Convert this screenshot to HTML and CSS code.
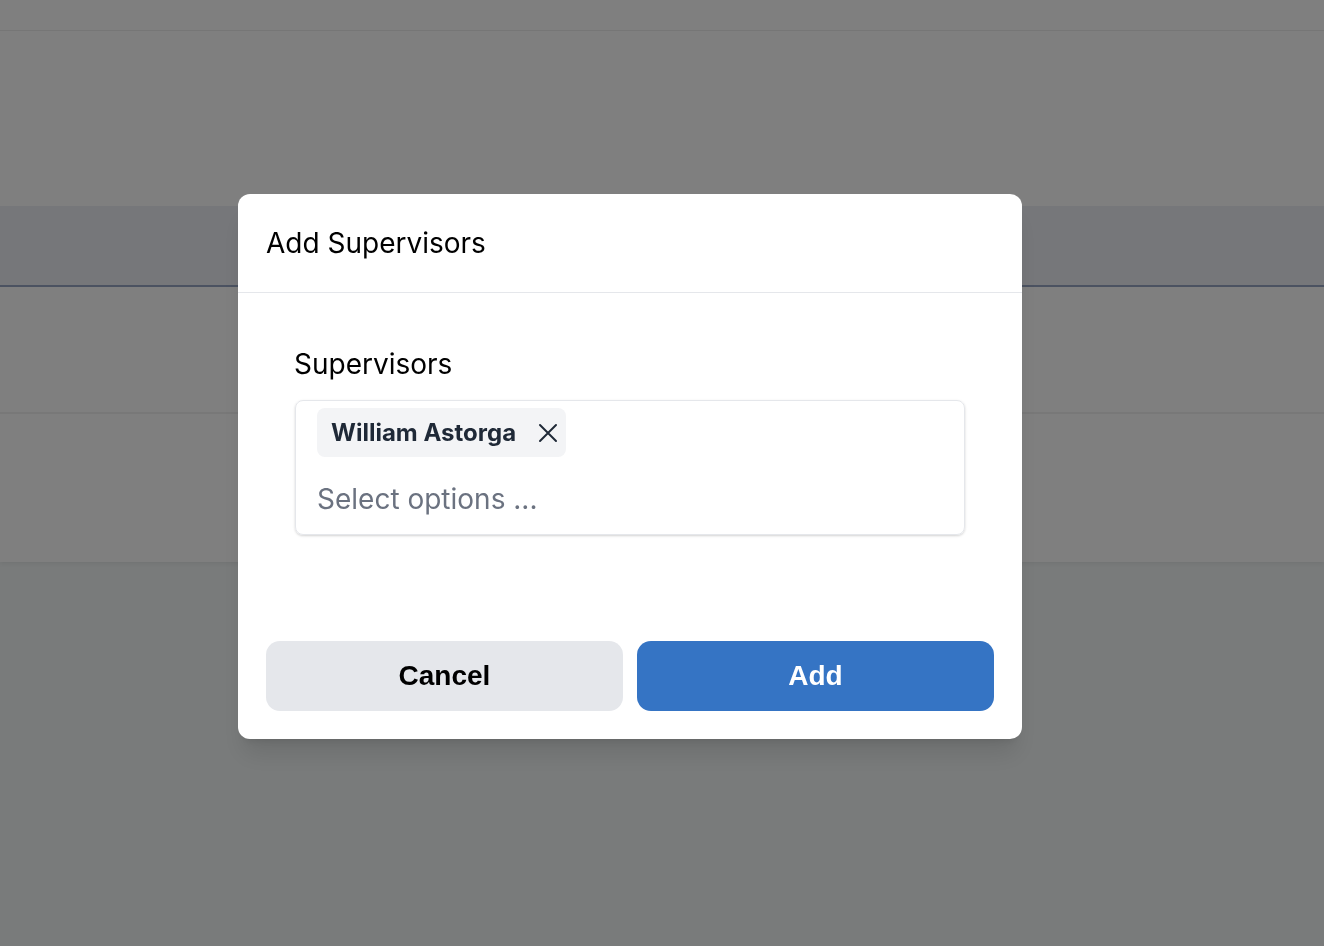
FILE: index.html
```html
<!DOCTYPE html>
<html lang="en">
<head>
<meta charset="utf-8">
<title>Add Supervisors</title>
<link rel="stylesheet" href="styles.css">
</head>
<body>
<div class="page">
  <div class="topbar"></div>
  <div class="top-space"></div>
  <div class="table">
    <div class="thead"></div>
    <div class="trow"></div>
    <div class="trow last"></div>
  </div>
</div>

<div class="overlay">
  <div class="modal">
    <div class="modal-header">
      <h2 class="modal-title">Add Supervisors</h2>
    </div>
    <div class="modal-body">
      <label class="field-label">Supervisors</label>
      <div class="multiselect">
        <div class="chips">
          <span class="chip">
            <span class="chip-text">William Astorga</span>
            <svg class="chip-x" viewBox="0 0 20 20" width="20" height="20" aria-hidden="true">
              <path d="M2 2 L18 18 M18 2 L2 18" stroke="#1f2937" stroke-width="2" stroke-linecap="round" fill="none"/>
            </svg>
          </span>
        </div>
        <div class="placeholder">Select options ...</div>
      </div>
    </div>
    <div class="modal-footer">
      <button class="btn btn-cancel">Cancel</button>
      <button class="btn btn-add">Add</button>
    </div>
  </div>
</div>
</body>
</html>
```

FILE: styles.css
```css
* { box-sizing: border-box; }

html, body {
  margin: 0;
  padding: 0;
  height: 100%;
}

body {
  background: #f2f6f6;
  font-family: Inter, "Noto Sans", sans-serif;
}

.page {
  display: flex;
  flex-direction: column;
}

.topbar {
  height: 31px;
  background: #ffffff;
  border-bottom: 1px solid #ececec;
}

.top-space {
  height: 175px;
  background: #ffffff;
}

.table {
  background: #ffffff;
  box-shadow: 0 2px 4px rgba(0, 0, 0, 0.06);
}

.thead {
  height: 81px;
  background: #eceef4;
  border-bottom: 2px solid #96a4c2;
}

.trow {
  height: 127px;
  border-bottom: 2px solid #f1f1f1;
}

.trow.last {
  height: 148px;
  border-bottom: 0;
}

.overlay {
  position: fixed;
  inset: 0;
  background: rgba(0, 0, 0, 0.5);
  display: flex;
  align-items: flex-start;
  padding: 194px 0 0 238px;
}

.modal {
  width: 784px;
  background: #ffffff;
  border-radius: 12px;
  box-shadow: 0 20px 25px -5px rgba(0, 0, 0, 0.1), 0 8px 10px -6px rgba(0, 0, 0, 0.1);
  display: flex;
  flex-direction: column;
}

.modal-header {
  height: 99px;
  padding: 0 28px;
  display: flex;
  align-items: center;
  border-bottom: 1px solid #e5e7eb;
}

.modal-title {
  margin: 0;
  font-size: 28px;
  font-weight: 400;
  color: #000000;
  line-height: 40px;
}

.modal-body {
  padding: 51px 57px 0 57px;
  display: flex;
  flex-direction: column;
}

.field-label {
  font-size: 28px;
  line-height: 40px;
  color: #000000;
  margin-bottom: 16px;
  margin-left: -1px;
}

.multiselect {
  border: 1px solid #e5e7eb;
  border-radius: 8px;
  box-shadow: 0 1px 3px rgba(0, 0, 0, 0.12), 0 1px 2px rgba(0, 0, 0, 0.06);
  padding: 7px 21px 15px 21px;
  display: flex;
  flex-direction: column;
  gap: 22px;
}

.chips {
  display: flex;
}

.chip {
  display: inline-flex;
  align-items: center;
  height: 49px;
  padding: 0 8px 0 14px;
  background: #f3f4f6;
  border-radius: 8px;
  gap: 22px;
}

.chip-text {
  font-size: 24px;
  font-weight: 700;
  color: #1f2937;
}

.chip-x {
  display: block;
}

.placeholder {
  font-size: 28px;
  line-height: 40px;
  color: #6b7280;
}

.modal-footer {
  display: flex;
  gap: 14px;
  padding: 106px 28px 28px 28px;
}

.btn {
  flex: 1;
  height: 70px;
  border: 0;
  border-radius: 14px;
  font-family: "Liberation Sans", Arial, sans-serif;
  font-size: 28px;
  font-weight: 700;
  cursor: pointer;
}

.btn-cancel {
  background: #e5e7eb;
  color: #000000;
}

.btn-add {
  background: #3574c4;
  color: #ffffff;
}
```
